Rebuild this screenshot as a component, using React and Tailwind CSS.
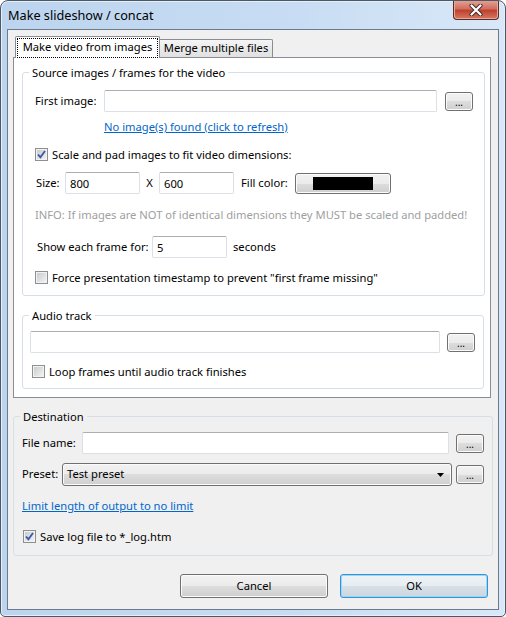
import React from "react";

// Win7 classic-looking push button
const btn =
  "rounded-[3px] border border-[#707070] bg-[linear-gradient(#f2f2f2,#ebebeb_50%,#dddddd_50%,#cfcfcf)] shadow-[inset_0_0_0_1px_#fbfbfb]";

const edit =
  "h-[22px] rounded-[2px] border border-[#dbdfe6] border-t-[#abadb3] bg-white px-[4px] outline-none";

const Browse = ({ className = "" }) => (
  <button
    className={`${btn} flex h-[19px] w-[28px] shrink-0 items-end justify-center pb-[3px] text-[10px] leading-none ${className}`}
  >
    ...
  </button>
);

const Check = ({ checked, label, className = "" }) => (
  <label className={`flex items-center ${className}`}>
    <span className="flex h-[13px] w-[13px] shrink-0 items-center justify-center border border-[#8e8f8f] bg-[#f4f4f4]">
      <span className="flex h-[11px] w-[11px] items-center justify-center border border-[#f2f2f2] bg-[linear-gradient(135deg,#c9cccf,#f1f1f1)]">
        {checked && (
          <svg width="9" height="9" viewBox="0 0 9 9">
            <path d="M1 4.5 L3.4 7.2 L8 1" fill="none" stroke="#3a58a8" strokeWidth="1.8" />
          </svg>
        )}
      </span>
    </span>
    <span className="ml-[4px] whitespace-nowrap leading-[15px]">{label}</span>
  </label>
);

const Group = ({ title, className = "", children }) => (
  <fieldset className={`rounded-[3px] border border-[#d5dfe5] ${className}`}>
    <legend className="ml-[6px] px-[3px] leading-[15px]">{title}</legend>
    {children}
  </fieldset>
);

const Link = ({ children, className = "" }) => (
  <a href="#" className={`whitespace-nowrap leading-[15px] text-[#0066cc] underline ${className}`}>
    {children}
  </a>
);

export default function App() {
  return (
    <div className="flex h-[617px] w-[506px] flex-col overflow-hidden rounded-t-[8px] rounded-b-[5px] border border-[#4b5866] bg-[linear-gradient(90deg,#bcd4ee,#c8ddf3_60%,#d9e8f8)] font-['Noto_Sans',sans-serif] text-[11.2px] text-black shadow-[inset_0_0_0_1px_#e4effa]">
      {/* title bar */}
      <div className="flex h-[28px] shrink-0 items-start pl-[7px] pr-[6px]">
        <div className="mt-[6px] flex-1 text-[12.7px] leading-[16px]">Make slideshow / concat</div>
        <button className="-mt-px flex h-[20px] w-[46px] items-center justify-center rounded-b-[4px] border border-t-0 border-[#5a2a24] bg-[linear-gradient(#e6a497,#d0705f_45%,#c0402f_55%,#d47a63)] shadow-[inset_0_0_0_1px_#eaa89a]">
          <svg width="14" height="12" viewBox="0 0 14 12">
            <path d="M2.5 1.5 L11.5 10.5 M11.5 1.5 L2.5 10.5" stroke="#3c2a28" strokeWidth="4" strokeLinecap="round" />
            <path d="M2.5 1.5 L11.5 10.5 M11.5 1.5 L2.5 10.5" stroke="#ffffff" strokeWidth="2.2" strokeLinecap="round" />
          </svg>
        </button>
      </div>

      {/* client area */}
      <div className="mx-[6px] mb-[6px] flex flex-1 flex-col border border-[#6c7b8b] bg-[#f0f0f0] px-[5px] pt-[6px]">
        {/* tabs */}
        <div className="relative z-10 -mb-px flex h-[22px] items-start pl-[2px]">
          <div className="h-[22px] w-[145px] rounded-t-[2px] border border-b-0 border-[#898c95] bg-white px-px pt-px">
            <div className="flex h-[20px] items-center justify-center whitespace-nowrap border border-dotted border-black pb-[2px]">
              Make video from images
            </div>
          </div>
          <div className="mt-[3px] flex h-[18px] w-[113px] items-center justify-center whitespace-nowrap rounded-tr-[2px] border border-b-0 border-l-0 border-[#898c95] bg-[linear-gradient(#f5f5f5,#eaeaea_50%,#e0e0e0)]">
            Merge multiple files
          </div>
        </div>

        {/* tab page */}
        <div className="mr-[2px] flex flex-col border border-[#898c95] bg-white pb-[8px] pl-[8px] pr-[6px] pt-[7px]">
          <Group title="Source images / frames for the video">
            <div className="flex flex-col pb-[10px] pl-[12px] pr-[11px]">
              <div className="mt-[10px] flex items-center">
                <span className="w-[69px]">First image:</span>
                <input className={`${edit} w-[333px]`} />
                <Browse className="ml-[8px]" />
              </div>
              <Link className="ml-[69px] mt-[7px] self-start">No image(s) found (click to refresh)</Link>
              <Check checked className="mt-[13px]" label="Scale and pad images to fit video dimensions:" />
              <div className="mt-[10px] flex items-center">
                <span className="ml-px w-[29px]">Size:</span>
                <input className={`${edit} w-[75px]`} defaultValue="800" />
                <span className="w-[19px] text-center">X</span>
                <input className={`${edit} w-[75px]`} defaultValue="600" />
                <span className="ml-[7px] w-[54px]">Fill color:</span>
                <button className={`${btn} flex h-[21px] w-[96px] items-center justify-center`}>
                  <span className="h-[13px] w-[60px] bg-black" />
                </button>
              </div>
              <div className="mt-[13px] whitespace-nowrap leading-[15px] text-[#a0a0a0]">
                INFO: If images are NOT of identical dimensions they MUST be scaled and padded!
              </div>
              <div className="mt-[14px] flex items-center">
                <span className="ml-[2px] w-[115px] whitespace-nowrap">Show each frame for:</span>
                <input className={`${edit} w-[75px]`} defaultValue="5" />
                <span className="ml-[6px]">seconds</span>
              </div>
              <Check className="mt-[12px]" label={'Force presentation timestamp to prevent "first frame missing"'} />
            </div>
          </Group>

          <Group title="Audio track" className="mt-[12px]">
            <div className="flex flex-col pb-[9px] pl-[7px] pr-[8px]">
              <div className="mt-[8px] flex items-center">
                <input className={`${edit} w-[410px]`} />
                <Browse className="ml-[7px]" />
              </div>
              <Check className="ml-[2px] mt-[11px]" label="Loop frames until audio track finishes" />
            </div>
          </Group>
        </div>

        <Group title="Destination" className="mt-[11px]">
          <div className="flex flex-col pb-[11px] pl-[8px] pr-[8px]">
            <div className="mt-[8px] flex items-center">
              <span className="w-[60px]">File name:</span>
              <input className={`${edit} w-[367px]`} />
              <Browse className="ml-[7px]" />
            </div>
            <div className="mt-[9px] flex items-center">
              <span className="w-[40px]">Preset:</span>
              <button className={`${btn} flex h-[23px] w-[390px] items-center pl-[4px] pr-[7px]`}>
                <span className="flex-1 text-left">Test preset</span>
                <svg width="7" height="4" viewBox="0 0 7 4">
                  <path d="M0 0 H7 L3.5 4 Z" fill="#000" />
                </svg>
              </button>
              <Browse className="ml-[4px]" />
            </div>
            <Link className="mt-[12px] self-start">Limit length of output to no limit</Link>
            <Check checked className="ml-px mt-[16px]" label="Save log file to *_log.htm" />
          </div>
        </Group>

        <div className="mr-[5px] mt-[18px] flex justify-end gap-[12px]">
          <button className={`${btn} h-[24px] w-[148px]`}>Cancel</button>
          <button className="h-[24px] w-[148px] rounded-[3px] border border-[#3c8fd4] bg-[linear-gradient(#eef3f7,#e6ecf1_50%,#d8e0e7_50%,#ccd6de)] shadow-[inset_0_0_0_1px_#8fdcfa]">
            OK
          </button>
        </div>
      </div>
    </div>
  );
}
